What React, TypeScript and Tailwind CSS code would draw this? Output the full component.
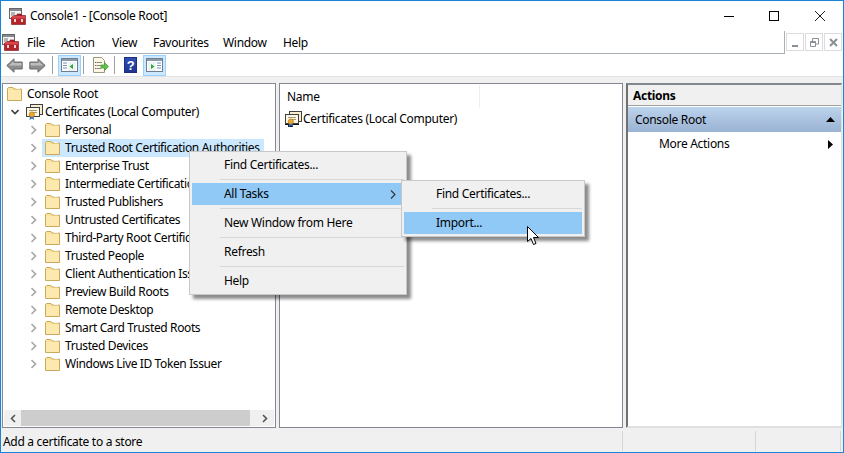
import React from 'react';

const stores = [
  'Personal',
  'Trusted Root Certification Authorities',
  'Enterprise Trust',
  'Intermediate Certification Authorities',
  'Trusted Publishers',
  'Untrusted Certificates',
  'Third-Party Root Certification Authorities',
  'Trusted People',
  'Client Authentication Issuers',
  'Preview Build Roots',
  'Remote Desktop',
  'Smart Card Trusted Roots',
  'Trusted Devices',
  'Windows Live ID Token Issuer',
];

const menus = [
  ['File', 'w-[34px]'],
  ['Action', 'w-[51px]'],
  ['View', 'w-[41px]'],
  ['Favourites', 'w-[70px]'],
  ['Window', 'w-[60px]'],
  ['Help', 'w-[40px]'],
];

const AppIcon = () => (
  <svg width="17" height="17" viewBox="0 0 17 17" className="shrink-0">
    <rect x="0.5" y="0.5" width="12" height="10" fill="#f4f4f4" stroke="#666" />
    <rect x="1" y="1" width="11" height="2" fill="#858a90" />
    <rect x="2" y="4.5" width="4" height="1" fill="#777" />
    <rect x="2" y="6.5" width="4" height="1" fill="#777" />
    <path d="M6 7.5H8V6H12V7.5H16.5V16.5H2.5V9Z" fill="#b3232a" stroke="#7a1218" strokeWidth="0.6" />
    <rect x="3" y="8" width="13" height="2.5" fill="#d9474c" />
    <rect x="5" y="11" width="2" height="3" fill="#f0d0d0" />
    <rect x="12" y="11" width="2" height="3" fill="#f0d0d0" />
  </svg>
);

const Folder = () => (
  <svg width="15" height="14" viewBox="0 0 15 14" className="shrink-0">
    <path d="M0.5 13.5V1.5L1.5 0.5H6L7 2H14.5V13.5Z" fill="#fbe39a" stroke="#c9a95c" />
    <rect x="1" y="3" width="13" height="10" fill="#fde9ae" />
    <rect x="9" y="1" width="4" height="1" fill="#f5f5f5" />
  </svg>
);

const CertIcon = ({ dark }: { dark?: boolean }) => (
  <svg width="17" height="16" viewBox="0 0 17 16" className="shrink-0">
    {dark && <path d="M0 3H4V0H17V11H14V14H8V16H3V14H0Z" fill="#111" />}
    <rect x="4.5" y="0.5" width="12" height="10" fill="#f7eed2" stroke="#3f3f3f" />
    <rect x="0.5" y="3.5" width="13" height="9" fill="#fbf6e6" stroke="#3f3f3f" />
    <rect x="3" y="6" width="8" height="1" fill="#a89a70" />
    <rect x="6" y="8" width="5" height="1" fill="#a89a70" />
    <path d="M4 12L3.5 16L6 14.5L8 16L7.5 12Z" fill="#2f6fc0" />
    <circle cx="5.8" cy="10.5" r="2.6" fill="#eda82c" stroke="#a86c10" strokeWidth="0.6" />
  </svg>
);

const Chevron = ({ down }: { down?: boolean }) => (
  <svg width="8" height="10" viewBox="0 0 8 10" className="shrink-0">
    {down ? (
      <path d="M0.5 3L4 6.5L7.5 3" fill="none" stroke="#404040" strokeWidth="1.6" />
    ) : (
      <path d="M1.5 1L5.5 5L1.5 9" fill="none" stroke="#a6a6a6" strokeWidth="1.6" />
    )}
  </svg>
);

const NavArrow = ({ flip }: { flip?: boolean }) => (
  <svg width="17" height="15" viewBox="0 0 17 15" className={flip ? 'shrink-0 -scale-x-100' : 'shrink-0'}>
    <path d="M0.8 7.5L8 0.8V4H16.2V11H8V14.2Z" fill="#8e8e8e" stroke="#6a6a6a" />
    <path d="M3 7.5L7.5 3.2V5H15.5V7.5Z" fill="#bdbdbd" />
  </svg>
);

const PaneIcon = ({ right }: { right?: boolean }) => (
  <svg width="17" height="14" viewBox="0 0 17 14">
    <rect x="0.5" y="0.5" width="16" height="13" fill="#fff" stroke="#6f7f8f" />
    <rect x="1" y="1" width="15" height="2" fill="#8b98a6" />
    <rect x={right ? 11 : 2} y="4.5" width="4" height="1" fill="#6d93b8" />
    <rect x={right ? 11 : 2} y="7" width="4" height="1" fill="#6d93b8" />
    <rect x={right ? 11 : 2} y="9.5" width="4" height="1" fill="#6d93b8" />
    <rect x={right ? 2 : 7} y="4" width="8" height="9" fill="#eef3f8" />
    {right ? <path d="M5 6L8.5 8.5L5 11Z" fill="#2fa52f" /> : <path d="M12 6L8.5 8.5L12 11Z" fill="#2fa52f" />}
  </svg>
);

const ExportIcon = () => (
  <svg width="17" height="17" viewBox="0 0 17 17">
    <path d="M1.5 0.5H9.5L12.5 3.5V15.5H1.5Z" fill="#fdf8e4" stroke="#9a9a80" />
    <rect x="3" y="5" width="1.5" height="1" fill="#666" />
    <rect x="5" y="5" width="5" height="1" fill="#888" />
    <rect x="3" y="8" width="1.5" height="1" fill="#666" />
    <rect x="5" y="8" width="4" height="1" fill="#888" />
    <rect x="3" y="11" width="1.5" height="1" fill="#666" />
    <rect x="5" y="11" width="4" height="1" fill="#888" />
    <path d="M9 8H12.5V5.5L16.5 9.5L12.5 13.5V11H9Z" fill="#5fc24a" stroke="#3c9a30" strokeWidth="0.7" />
  </svg>
);

const HelpIcon = () => (
  <div className="w-[13px] h-[16px] bg-gradient-to-b from-[#2f4fb8] to-[#1f3590] border border-[#1d2f7a] flex items-center justify-center text-white font-bold text-[13px] leading-none font-['Liberation_Sans',sans-serif]">
    ?
  </div>
);

const Sep = () => <div className="w-px h-[18px] bg-[#a0a0a0]" />;

const MenuRow = ({ label, active, arrow }: { label: string; active?: boolean; arrow?: boolean }) => (
  <div className={`h-[22px] flex items-center justify-between pl-[32px] pr-[8px] ${active ? 'bg-[#90c8f6]' : ''}`}>
    <span>{label}</span>
    {arrow && (
      <svg width="6" height="9" viewBox="0 0 6 9">
        <path d="M1 0.5L5 4.5L1 8.5" fill="none" stroke="#333" strokeWidth="1.1" />
      </svg>
    )}
  </div>
);

const MenuSep = () => (
  <div className="h-[7px] flex items-center pl-[28px]">
    <div className="h-px w-full bg-[#d7d7d7]" />
  </div>
);

const App = () => {
  return (
    <div className="relative w-[844px] h-[453px] overflow-hidden flex flex-col bg-white border border-[#1883d7] text-[12px] leading-[18px] tracking-[-0.3px] text-black font-['Noto_Sans',sans-serif]">
      {/* title bar */}
      <div className="h-[30px] shrink-0 flex items-center pl-[8px]">
        <AppIcon />
        <span className="ml-[4px]">Console1 - [Console Root]</span>
        <div className="ml-auto flex items-center mb-[1px]">
          <svg width="10" height="10" viewBox="0 0 10 10" className="mr-[35px]">
            <path d="M0 5.5H10" stroke="#000" />
          </svg>
          <svg width="10" height="10" viewBox="0 0 10 10" className="mr-[36px]">
            <rect x="0.5" y="0.5" width="9" height="9" fill="none" stroke="#000" />
          </svg>
          <svg width="10" height="10" viewBox="0 0 10 10" className="mr-[18px]">
            <path d="M0 0L10 10M10 0L0 10" stroke="#000" strokeWidth="0.9" />
          </svg>
        </div>
      </div>

      {/* menu bar */}
      <div className="h-[23px] shrink-0 flex">
        <div className="flex-1 flex items-center border-b border-r border-[#a9b0b8] pl-[1px]">
          <AppIcon />
          <div className="flex ml-[8px] pt-[1px]">
            {menus.map(([name, width]) => (
              <span key={name} className={width}>
                {name}
              </span>
            ))}
          </div>
        </div>
        <div className="w-[58px] flex justify-end gap-[1px] pt-[2px] pr-px">
          {['min', 'restore', 'close'].map((b) => (
            <div key={b} className="w-[18px] h-[18px] border border-[#dcdcdc] flex items-center justify-center">
              <svg width="9" height="9" viewBox="0 0 9 9">
                {b === 'min' && <rect x="1" y="7" width="6" height="2" fill="#8a8f96" />}
                {b === 'restore' && (
                  <path d="M0.5 3.5H5.5V8.5H0.5ZM2.5 3V0.5H8.5V6H6M0 4.5H6" fill="none" stroke="#8a8f96" />
                )}
                {b === 'close' && <path d="M1 1L8 8M8 1L1 8" stroke="#8a8f96" strokeWidth="2" />}
              </svg>
            </div>
          ))}
        </div>
      </div>

      {/* toolbar */}
      <div className="h-[23px] shrink-0 flex items-center pl-[5px] border-b border-[#e2e2e2]">
        <NavArrow />
        <div className="w-[6px]" />
        <NavArrow flip />
        <div className="w-[6px]" />
        <Sep />
        <div className="ml-[5px] w-[23px] h-[21px] bg-[#cce8ff] border border-[#99d1ff] flex items-center justify-center">
          <PaneIcon />
        </div>
        <div className="w-[2px]" />
        <Sep />
        <div className="ml-[8px]">
          <ExportIcon />
        </div>
        <div className="w-[5px]" />
        <Sep />
        <div className="ml-[9px]">
          <HelpIcon />
        </div>
        <div className="ml-[6px] w-[23px] h-[21px] bg-[#cce8ff] border border-[#99d1ff] flex items-center justify-center">
          <PaneIcon right />
        </div>
      </div>

      {/* panes */}
      <div className="flex-1 min-h-0 flex bg-[#f0f0f0] pt-[6px]">
        <div className="w-[274px] shrink-0 ml-px mb-[1px] bg-white border border-[#828790] flex flex-col overflow-hidden">
          <div className="flex-1 min-h-0 pt-[1px]">
            <div className="h-[18px] flex items-center pl-[4px]">
              <Folder />
              <span className="ml-[5px] whitespace-nowrap">Console Root</span>
            </div>
            <div className="h-[18px] flex items-center pl-[8px]">
              <Chevron down />
              <div className="w-[7px]" />
              <CertIcon />
              <span className="ml-[2px] whitespace-nowrap">Certificates (Local Computer)</span>
            </div>
            {stores.map((store, i) => (
              <div key={store} className="h-[18px] flex items-center pl-[27px]">
                <Chevron />
                <div className={`ml-[4px] h-[18px] flex items-center pl-[3px] pr-[4px] tracking-[-0.38px] ${i === 1 ? 'bg-[#cce8ff]' : ''}`}>
                  <Folder />
                  <span className="ml-[5px] whitespace-nowrap">{store}</span>
                </div>
              </div>
            ))}
          </div>
          <div className="h-[16px] mb-px mx-px shrink-0 bg-[#f0f0f0] flex items-center justify-between">
            <div className="w-[17px] flex justify-center">
              <svg width="6" height="9" viewBox="0 0 6 9">
                <path d="M5 1L1.5 4.5L5 8" fill="none" stroke="#555" strokeWidth="1.6" />
              </svg>
            </div>
            <div className="w-[229px] h-full bg-[#cdcdcd] mr-auto" />
            <div className="w-[18px] flex justify-center">
              <svg width="6" height="9" viewBox="0 0 6 9">
                <path d="M1 1L4.5 4.5L1 8" fill="none" stroke="#555" strokeWidth="1.6" />
              </svg>
            </div>
          </div>
        </div>

        <div className="w-[344px] shrink-0 ml-[3px] mb-[1px] bg-white border border-[#828790]">
          <div className="h-[24px] flex items-center pl-[7px] pt-[1px]">
            <span className="w-[193px] border-r border-[#eeeeee] h-full flex items-center">Name</span>
          </div>
          <div className="h-[20px] flex items-center pl-[5px] pt-[1px]">
            <CertIcon dark />
            <span className="ml-px whitespace-nowrap">Certificates (Local Computer)</span>
          </div>
        </div>

        <div className="flex-1 ml-[3px] mr-px mb-[1px] bg-white border-t-2 border-l-2 border-r border-b-2 border-t-[#828790] border-l-[#707070] border-r-[#e0e0e0] border-b-[#e0e0e0]">
          <div className="h-[21px] bg-[#f0f0f0] border-b border-[#a0a0a0] flex items-center pl-[5px] pt-[1px] font-bold">Actions</div>
          <div className="h-[25px] mt-px bg-gradient-to-b from-[#bcd3ec] to-[#9ab3d3] flex items-center justify-between pl-[7px] pr-[6px]">
            <span>Console Root</span>
            <svg width="9" height="5" viewBox="0 0 9 5">
              <path d="M4.5 0L9 5H0Z" fill="#000" />
            </svg>
          </div>
          <div className="h-[24px] flex items-center justify-between pl-[31px] pr-[8px]">
            <span>More Actions</span>
            <svg width="5" height="9" viewBox="0 0 5 9">
              <path d="M0 0L5 4.5L0 9Z" fill="#000" />
            </svg>
          </div>
        </div>
      </div>

      {/* status bar */}
      <div className="h-[23px] shrink-0 flex items-center bg-[#f0f0f0] border-t border-[#f0f0f0]">
        <div className="w-[621px] pl-[2px] pt-[1px] h-full flex items-center">Add a certificate to a store</div>
        <div className="w-[133px] h-[20px] border-l border-[#d5d5d5]" />
        <div className="w-[85px] h-[20px] border-l border-[#d5d5d5]" />
        <div className="h-[20px] border-l border-[#d5d5d5]" />
      </div>

      {/* context menu */}
      <div className="absolute left-[188px] top-[150px] w-[218px] h-[144px] bg-[#f0f0f0] border border-[#c8c8c8] p-[2px] shadow-[4px_4px_3px_rgba(0,0,0,0.45)]">
        <MenuRow label="Find Certificates..." />
        <MenuSep />
        <MenuRow label="All Tasks" active arrow />
        <MenuSep />
        <MenuRow label="New Window from Here" />
        <MenuSep />
        <MenuRow label="Refresh" />
        <MenuSep />
        <MenuRow label="Help" />
      </div>

      {/* All Tasks submenu */}
      <div className="absolute left-[400px] top-[179px] w-[184px] h-[57px] bg-[#f0f0f0] border border-[#c8c8c8] p-[2px] shadow-[4px_4px_3px_rgba(0,0,0,0.45)]">
        <MenuRow label="Find Certificates..." />
        <MenuSep />
        <MenuRow label="Import..." active />
      </div>

      {/* mouse pointer */}
      <svg width="13" height="20" viewBox="0 0 13 20" className="absolute left-[526px] top-[225px]">
        <path d="M0.5 0.5V15.5L4 12.5L6.5 18.5L9 17.5L6.5 11.5H11.5Z" fill="#fff" stroke="#000" />
      </svg>
    </div>
  );
};

export default App;
